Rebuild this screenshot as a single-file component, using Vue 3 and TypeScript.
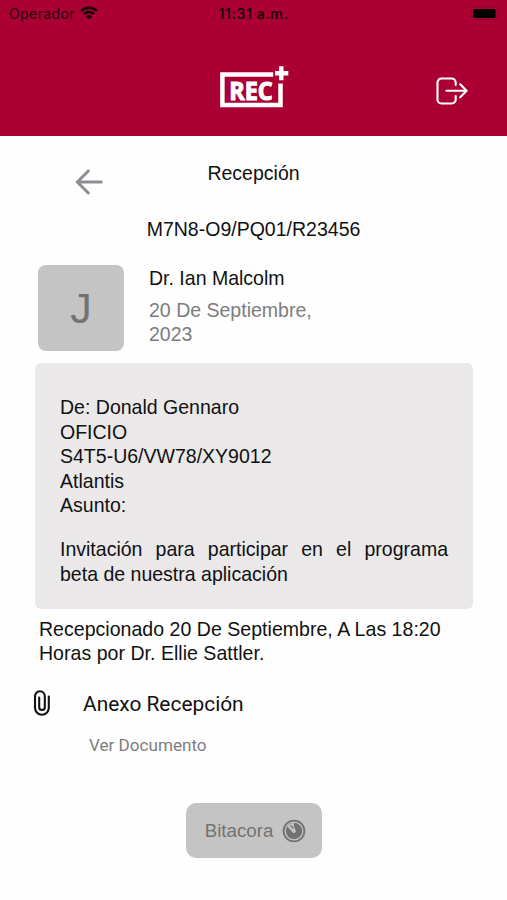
<script setup lang="ts">
interface Reception {
  folio: string
  initial: string
  recipient: string
  date: string
  details: string[]
  subject: string
  receipt: string
}

const reception: Reception = {
  folio: 'M7N8-O9/PQ01/R23456',
  initial: 'J',
  recipient: 'Dr. Ian Malcolm',
  date: '20 De Septiembre, 2023',
  details: ['De: Donald Gennaro', 'OFICIO', 'S4T5-U6/VW78/XY9012', 'Atlantis', 'Asunto:'],
  subject: 'Invitación para participar en el programa beta de nuestra aplicación',
  receipt: 'Recepcionado 20 De Septiembre, A Las 18:20 Horas por Dr. Ellie Sattler.',
}
</script>

<template>
  <div class="screen">
    <header class="header">
      <div class="status">
        <div class="carrier">
          <span>Operador</span>
          <svg class="wifi" viewBox="0 0 18 14" width="18" height="14">
            <path d="M1 5.1a11.3 11.3 0 0 1 16 0M3.9 8.2a7.2 7.2 0 0 1 10.2 0" fill="none" stroke="#160008" stroke-width="2.5" />
            <path d="M6 10.5a4.3 4.3 0 0 1 6 0L9 13.6z" fill="#160008" />
          </svg>
        </div>
        <span class="time">11:31 a.m.</span>
        <svg class="battery" viewBox="0 0 34 15" width="34" height="15">
          <rect x="1" y="1" width="27" height="12.5" rx="3.5" fill="none" stroke="#8c0028" stroke-width="1" />
          <rect x="3" y="3" width="22.5" height="9" rx="1.5" fill="#000" />
          <path d="M29.5 5q2 2 0 4z" fill="#8c0028" />
        </svg>
      </div>
      <div class="brand-bar">
        <svg class="logo" viewBox="0 0 70 44" width="70" height="44" aria-label="REC">
          <path d="M54.2 9.5H3.4v30.4h58.1V18.5" fill="none" stroke="#fff" stroke-width="4.5" />
          <path d="M62.3 1.2v14M56 8.3h13.3" fill="none" stroke="#fff" stroke-width="4.4" />
          <text x="10.2" y="35" textLength="43.5" lengthAdjust="spacingAndGlyphs" class="logo-text">REC</text>
        </svg>
        <svg class="logout" viewBox="0 0 32 28" width="32" height="28" fill="none" stroke="#fff" stroke-width="2.1" stroke-linecap="round" stroke-linejoin="round">
          <path d="M19.7 8V5.5a4 4 0 0 0-4-4H5.5a4 4 0 0 0-4 4v17a4 4 0 0 0 4 4h10.2a4 4 0 0 0 4-4V19" />
          <path d="M10.4 13.8h20M24.2 7.3l6.4 6.5-6.4 6.5" />
        </svg>
      </div>
    </header>

    <main class="content">
      <div class="title-row">
        <svg class="back" viewBox="0 0 28 26" width="28" height="26" fill="none" stroke="#8e8e93" stroke-width="3" stroke-linecap="round" stroke-linejoin="round">
          <path d="M26.3 13H2.3M13.3 2L2.3 13l11 11" />
        </svg>
        <h1 class="title">Recepción</h1>
      </div>
      <div class="folio">{{ reception.folio }}</div>

      <section class="person">
        <div class="avatar">{{ reception.initial }}</div>
        <div class="person-text">
          <div class="name">{{ reception.recipient }}</div>
          <div class="date">{{ reception.date }}</div>
        </div>
      </section>

      <section class="card">
        <div v-for="line in reception.details" :key="line">{{ line }}</div>
        <p class="subject">{{ reception.subject }}</p>
      </section>

      <p class="receipt">{{ reception.receipt }}</p>

      <section class="attachment">
        <svg class="clip" viewBox="0 0 18 26" width="18" height="26" fill="none" stroke="#111" stroke-width="2.1" stroke-linecap="round">
          <path d="M15.8 6.5v11.3a6.9 6.9 0 0 1-13.8 0V6.2a4.9 4.9 0 0 1 9.8 0v11a2.8 2.8 0 0 1-5.6 0V7.5" />
        </svg>
        <div>
          <div class="attachment-title">Anexo Recepción</div>
          <div class="attachment-link">Ver Documento</div>
        </div>
      </section>

      <button class="log" type="button">
        <span>Bitacora</span>
        <svg viewBox="0 0 24 24" width="24" height="24">
          <circle cx="12" cy="12" r="10.4" fill="none" stroke="#737373" stroke-width="1.9" />
          <circle cx="12" cy="12" r="8.2" fill="#737373" />
          <path d="M6.6 5.8L12 3.4v4.4l1.6 3.4a1.8 1.8 0 0 1-2.8 2.2L5.4 7.6z" fill="#c4c4c4" />
          <path d="M7.4 5.8l3.6 1.4.6 3.6z" fill="#737373" />
        </svg>
      </button>
    </main>
  </div>
</template>

<style>
body {
  margin: 0;
  background: #fff;
}
</style>

<style scoped>
.screen {
  width: 507px;
  height: 900px;
  overflow: hidden;
  background: #fefefe;
  color: #111;
  font-family: 'Liberation Sans', Arial, sans-serif;
  font-size: 19.53px;
  line-height: 24.4px;
}
.header {
  height: 135.5px;
  background: #aa0034;
}
.status {
  display: grid;
  grid-template-columns: 1fr auto 1fr;
  align-items: center;
  height: 28px;
  padding: 0 3px 0 9px;
  color: #250009;
  font-family: Inter, sans-serif;
  font-size: 14px;
  letter-spacing: 0.4px;
  line-height: 28px;
}
.carrier {
  display: flex;
  align-items: center;
  gap: 5px;
}
.wifi {
  margin-top: -3px;
}
.time {
  margin-left: -6px;
  font-weight: 600;
  font-size: 14px;
  letter-spacing: 0.6px;
}
.battery {
  justify-self: end;
  margin-top: -1px;
}
.brand-bar {
  display: grid;
  grid-template-columns: 1fr auto 1fr;
  padding: 37px 39px 0 39px;
}
.logo {
  grid-column: 2;
}
.logo-text {
  fill: #fff;
  stroke: #fff;
  stroke-width: 1.1px;
  font-family: 'Open Sans', sans-serif;
  font-size: 25px;
  font-weight: 700;
}
.logout {
  justify-self: end;
  margin-top: 12px;
}
.content {
  display: flex;
  flex-direction: column;
}
.title-row {
  display: grid;
  grid-template-columns: 1fr auto 1fr;
  height: 56px;
  padding-top: 25.5px;
  box-sizing: border-box;
}
.back {
  margin: 8px 0 0 75px;
}
.title {
  margin: 0;
  font: inherit;
}
.folio {
  margin-top: 25.5px;
  text-align: center;
}
.person {
  display: flex;
  gap: 25px;
  margin: 23.6px 0 0 38px;
}
.avatar {
  display: grid;
  place-items: center;
  width: 86px;
  height: 86px;
  border-radius: 8px;
  background: #c4c4c4;
  color: #737373;
  font-size: 43px;
  line-height: 86px;
}
.person-text {
  width: 190px;
  padding-top: 1px;
}
.date {
  margin-top: 7.5px;
  color: #7d7d7d;
}
.card {
  width: 438px;
  height: 246px;
  margin: 12px 0 0 35px;
  padding: 32.4px 25px 0;
  box-sizing: border-box;
  border-radius: 6px;
  background: #eae8e9;
}
.subject {
  margin: 20px 0 0;
  text-align: justify;
}
.receipt {
  width: 430px;
  margin: 8px 0 0 39px;
  letter-spacing: 0.03px;
}
.attachment {
  display: flex;
  gap: 32px;
  margin: 24px 0 0 33px;
  font-family: Roboto, sans-serif;
}
.attachment-title {
  font-size: 20.9px;
  line-height: 28px;
}
.attachment-link {
  margin: 15px 0 0 6px;
  color: #7d7d7d;
  font-size: 17.1px;
  line-height: 24px;
}
.log {
  display: flex;
  align-items: center;
  justify-content: center;
  gap: 9px;
  width: 136px;
  height: 55px;
  margin: 46px 0 0 186px;
  padding: 1px 0 0 3px;
  border: 0;
  border-radius: 10px;
  background: #c4c4c4;
  color: #737373;
  font-family: inherit;
  font-size: 18.7px;
}
</style>
